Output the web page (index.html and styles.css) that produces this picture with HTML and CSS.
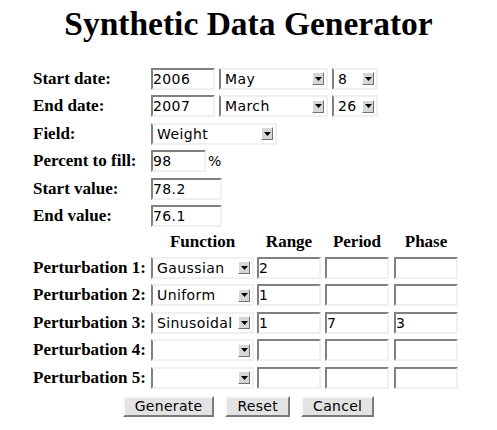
FILE: index.html
```html
<!DOCTYPE html>
<html>
<head>
<meta charset="utf-8">
<title>Synthetic Data Generator</title>
<link rel="stylesheet" href="styles.css">
</head>
<body>
<h1 class="title">Synthetic Data Generator</h1>
<form class="gen">
  <div class="row">
    <label class="lbl">Start date:</label>
    <div class="ctl">
      <span class="inp w-year">2006</span>
      <span class="sel w-month"><span class="val">May</span><span class="arr"><svg width="7" height="4" viewBox="0 0 7 4"><path d="M0 0H7L3.5 4Z"/></svg></span></span>
      <span class="sel w-day"><span class="val">8</span><span class="arr"><svg width="7" height="4" viewBox="0 0 7 4"><path d="M0 0H7L3.5 4Z"/></svg></span></span>
    </div>
  </div>
  <div class="row">
    <label class="lbl">End date:</label>
    <div class="ctl">
      <span class="inp w-year">2007</span>
      <span class="sel w-month"><span class="val">March</span><span class="arr"><svg width="7" height="4" viewBox="0 0 7 4"><path d="M0 0H7L3.5 4Z"/></svg></span></span>
      <span class="sel w-day"><span class="val">26</span><span class="arr"><svg width="7" height="4" viewBox="0 0 7 4"><path d="M0 0H7L3.5 4Z"/></svg></span></span>
    </div>
  </div>
  <div class="row">
    <label class="lbl">Field:</label>
    <div class="ctl">
      <span class="sel w-field"><span class="val">Weight</span><span class="arr"><svg width="7" height="4" viewBox="0 0 7 4"><path d="M0 0H7L3.5 4Z"/></svg></span></span>
    </div>
  </div>
  <div class="row">
    <label class="lbl">Percent to fill:</label>
    <div class="ctl">
      <span class="inp w-pct">98</span><span class="unit">%</span>
    </div>
  </div>
  <div class="row">
    <label class="lbl">Start value:</label>
    <div class="ctl"><span class="inp w-val">78.2</span></div>
  </div>
  <div class="row">
    <label class="lbl">End value:</label>
    <div class="ctl"><span class="inp w-val">76.1</span></div>
  </div>

  <div class="hdr">
    <span class="lbl"></span>
    <span class="h w-func">Function</span>
    <span class="h w-num">Range</span>
    <span class="h w-num">Period</span>
    <span class="h w-num">Phase</span>
  </div>

  <div class="prow">
    <label class="lbl">Perturbation 1:</label>
    <span class="sel w-func"><span class="val">Gaussian</span><span class="arr"><svg width="7" height="4" viewBox="0 0 7 4"><path d="M0 0H7L3.5 4Z"/></svg></span></span>
    <span class="inp w-num">2</span>
    <span class="inp w-num"></span>
    <span class="inp w-num"></span>
  </div>
  <div class="prow">
    <label class="lbl">Perturbation 2:</label>
    <span class="sel w-func"><span class="val">Uniform</span><span class="arr"><svg width="7" height="4" viewBox="0 0 7 4"><path d="M0 0H7L3.5 4Z"/></svg></span></span>
    <span class="inp w-num">1</span>
    <span class="inp w-num"></span>
    <span class="inp w-num"></span>
  </div>
  <div class="prow">
    <label class="lbl">Perturbation 3:</label>
    <span class="sel w-func"><span class="val">Sinusoidal</span><span class="arr"><svg width="7" height="4" viewBox="0 0 7 4"><path d="M0 0H7L3.5 4Z"/></svg></span></span>
    <span class="inp w-num">1</span>
    <span class="inp w-num">7</span>
    <span class="inp w-num">3</span>
  </div>
  <div class="prow">
    <label class="lbl">Perturbation 4:</label>
    <span class="sel w-func"><span class="val"></span><span class="arr"><svg width="7" height="4" viewBox="0 0 7 4"><path d="M0 0H7L3.5 4Z"/></svg></span></span>
    <span class="inp w-num"></span>
    <span class="inp w-num"></span>
    <span class="inp w-num"></span>
  </div>
  <div class="prow">
    <label class="lbl">Perturbation 5:</label>
    <span class="sel w-func"><span class="val"></span><span class="arr"><svg width="7" height="4" viewBox="0 0 7 4"><path d="M0 0H7L3.5 4Z"/></svg></span></span>
    <span class="inp w-num"></span>
    <span class="inp w-num"></span>
    <span class="inp w-num"></span>
  </div>

  <div class="buttons">
    <span class="btn">Generate</span>
    <span class="btn">Reset</span>
    <span class="btn">Cancel</span>
  </div>
</form>
</body>
</html>
```

FILE: styles.css
```css
html, body {
  margin: 0;
  padding: 0;
  background: #ffffff;
  color: #000000;
}
body {
  width: 497px;
  height: 430px;
  overflow: hidden;
}
.title {
  margin: 0;
  padding-top: 4px;
  height: 50px;
  text-align: center;
  font-family: "Liberation Serif", serif;
  font-weight: bold;
  font-size: 33.5px;
  line-height: 40px;
}
.gen {
  padding-left: 33px;
  padding-top: 11px;
}
.row, .prow {
  display: flex;
  align-items: center;
  height: 27.5px;
}
.lbl {
  width: 118px;
  flex: none;
  font-family: "Liberation Serif", serif;
  font-weight: bold;
  font-size: 17px;
  white-space: nowrap;
}
.ctl {
  display: flex;
  align-items: center;
  gap: 3px;
}
.inp, .sel {
  box-sizing: border-box;
  height: 22px;
  display: inline-flex;
  align-items: center;
  border-style: solid;
  border-width: 2px;
  border-color: #808080 #f0f0f0 #f0f0f0 #808080;
  background: #ffffff;
  font-family: "DejaVu Sans", sans-serif;
  font-size: 14px;
  letter-spacing: 0.4px;
  padding-left: 0;
  flex: none;
}
.sel {
  padding-left: 4px;
  padding-right: 2px;
  justify-content: space-between;
  border-top-color: #f0f0f0;
}
.val {
  white-space: nowrap;
  overflow: hidden;
}
.arr {
  box-sizing: border-box;
  width: 12px;
  height: 13px;
  display: inline-flex;
  align-items: center;
  justify-content: center;
  background: #d6d6d6;
  border-style: solid;
  border-width: 1px;
  border-color: #ffffff #707070 #707070 #ffffff;
  flex: none;
}
.arr svg { display: block; fill: #000; }
.w-year { width: 64px; }
.w-month { width: 109px; margin-left: 1px; }
.w-day { width: 46px; margin-left: 1px; }
.w-field { width: 126px; }
.w-pct { width: 55px; }
.w-val { width: 71px; }
.unit {
  font-family: "DejaVu Sans", sans-serif;
  font-size: 14px;
  margin-left: -1px;
}
.hdr {
  display: flex;
  align-items: center;
  gap: 0 4px;
  height: 24px;
  margin-top: 0;
}
.hdr .lbl { width: 114px; }
.h {
  text-align: center;
  font-family: "Liberation Serif", serif;
  font-weight: bold;
  font-size: 17px;
  flex: none;
}
.prow { gap: 0 4px; }
.prow .lbl { width: 114px; }
.w-func { width: 103px; margin-right: -1px; }
.w-num { width: 64px; }
.prow .w-num:last-child { margin-left: 1px; }
.hdr .w-num:last-child { margin-left: 1px; }
.buttons {
  display: flex;
  justify-content: center;
  gap: 11px;
  margin-left: -33px;
  margin-top: 4px;
}
.btn {
  box-sizing: border-box;
  height: 21px;
  display: inline-flex;
  align-items: center;
  padding: 0 10px;
  background: #e3e3e3;
  border-style: solid;
  border-width: 2px;
  border-color: #f8f8f8 #7a7a7a #7a7a7a #f8f8f8;
  font-family: "DejaVu Sans", sans-serif;
  font-size: 14px;
  letter-spacing: 0.3px;
}
```
